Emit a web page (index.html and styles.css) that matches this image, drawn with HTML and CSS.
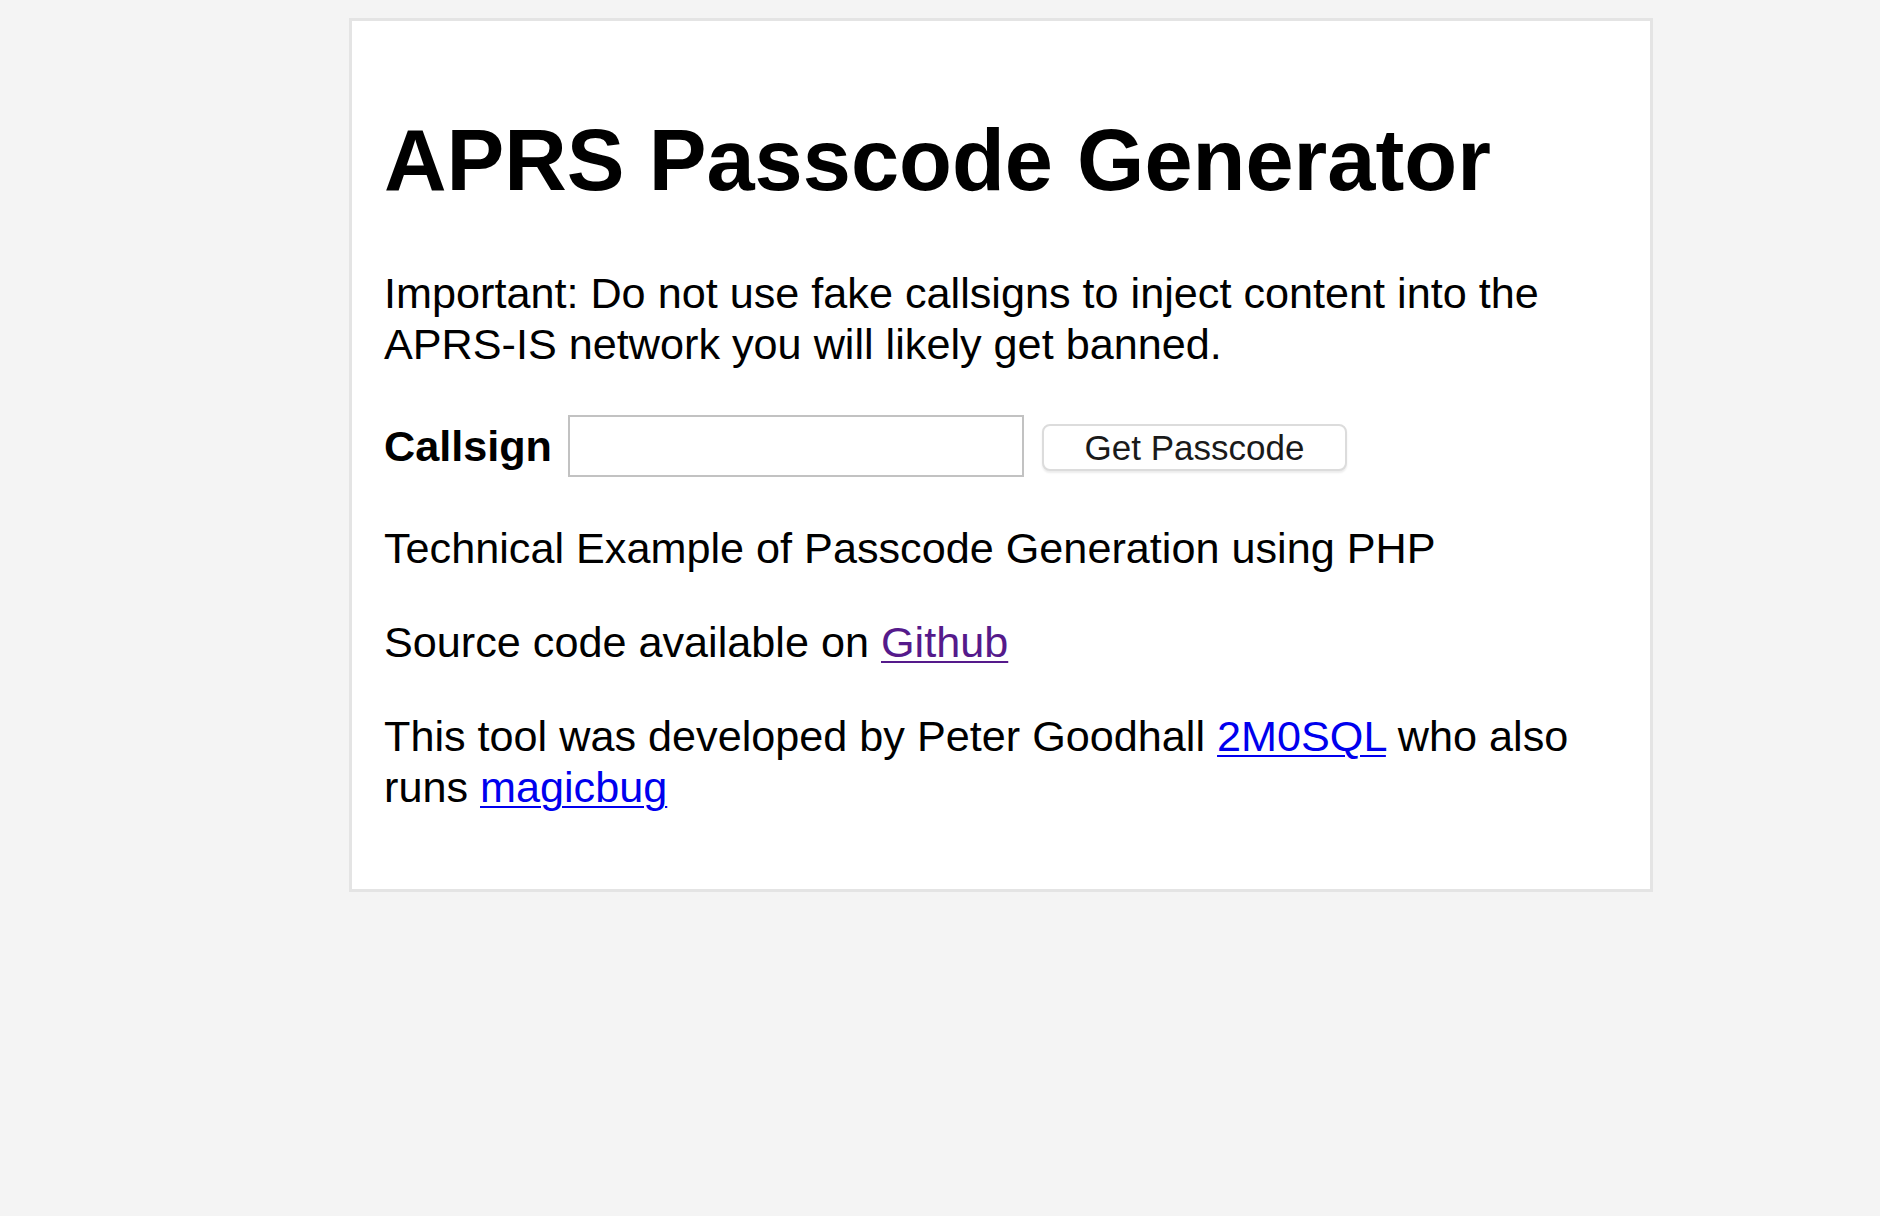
FILE: index.html
```html
<!DOCTYPE html>
<html lang="en">

<head>
    <meta charset="UTF-8">
    <meta name="viewport" content="width=device-width, initial-scale=1.0">
    <title>APRS Passcode Generator</title>
    <link rel="stylesheet" href="styles.css">
</head>

<body>
    <div class="container">
        <h1>APRS Passcode Generator</h1>
        <p>Important: Do not use fake callsigns to inject content into the APRS-IS network you will likely get banned.</p>
        <form class="passcode-form" method="post" action="">
            <label for="callsign">Callsign</label>
            <input type="text" id="callsign" name="callsign">
            <button type="submit">Get Passcode</button>
        </form>
        <p>Technical Example of Passcode Generation using PHP</p>
        <p>Source code available on <a class="visited" href="#github">Github</a></p>
        <p>This tool was developed by Peter Goodhall <a href="#2m0sql">2M0SQL</a> who also runs <a href="#magicbug">magicbug</a></p>
    </div>
</body>

</html>
```

FILE: styles.css
```css
body {
    margin: 0;
    background-color: #f4f4f4;
    font-family: "Liberation Sans", Arial, Helvetica, sans-serif;
    font-size: 43.2px;
    line-height: 51px;
    color: #000;
}

.container {
    width: 1234px;
    margin: 18px 0 0 349px;
    padding: 32px;
    background-color: #fff;
    border: 3px solid #e4e4e4;
}

h1 {
    font-size: 86.6px;
    line-height: 100px;
    font-weight: bold;
    margin: 57px 0 58px;
}

p {
    margin: 0 0 43px;
}

p:last-child {
    margin-bottom: 44px;
}

a {
    color: #0000ee;
    text-decoration-thickness: 2px;
    text-underline-offset: 4px;
}

a.visited {
    color: #551a8b;
}

.passcode-form {
    display: flex;
    align-items: center;
    padding: 2px 0 5px;
    margin: 0 0 41px;
}

.passcode-form label {
    font-weight: bold;
    margin-right: 16px;
}

.passcode-form input[type="text"] {
    box-sizing: border-box;
    width: 456px;
    height: 62px;
    margin: 0 18px 0 0;
    padding: 4px 8px;
    border: 2px solid #c2c2c2;
    font-family: inherit;
    font-size: 35px;
}

.passcode-form button {
    box-sizing: border-box;
    width: 305px;
    height: 47px;
    margin-top: 3px;
    padding: 0;
    background-color: #fff;
    border: 2px solid #dcdcdc;
    border-radius: 8px;
    box-shadow: 0 2px 2px rgba(0, 0, 0, 0.08);
    font-family: "Liberation Sans", Arial, sans-serif;
    font-size: 35px;
    color: #1a1a1a;
    cursor: pointer;
}
```
